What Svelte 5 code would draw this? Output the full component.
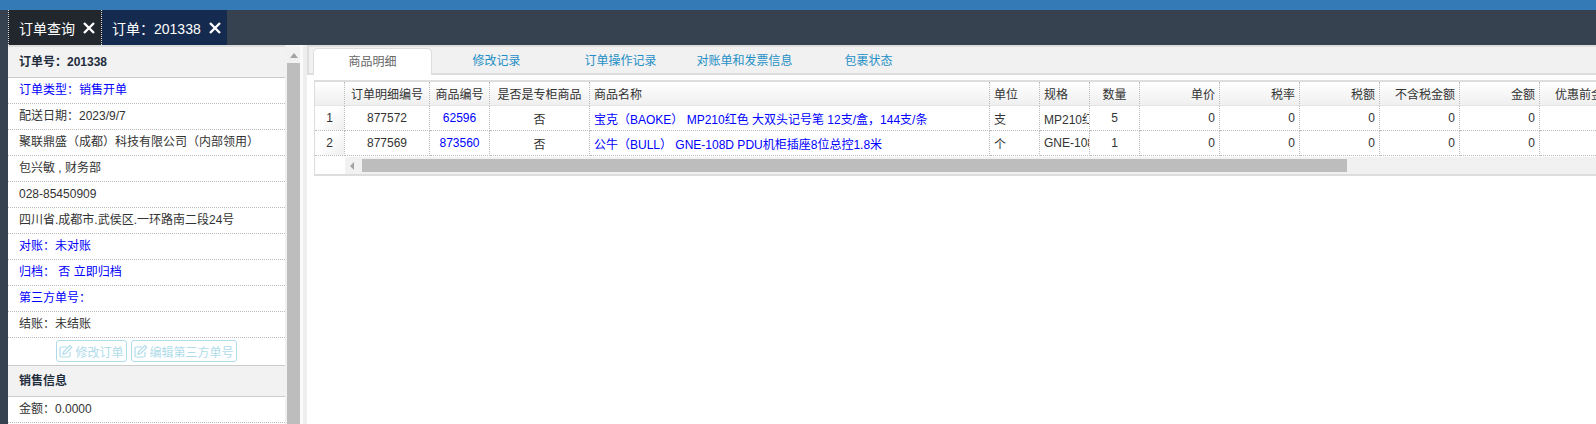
<script>
  const info = [
    { text: '订单类型：销售开单', link: true },
    { text: '配送日期：2023/9/7' },
    { text: '聚联鼎盛（成都）科技有限公司（内部领用）' },
    { text: '包兴敏 , 财务部' },
    { text: '028-85450909' },
    { text: '四川省.成都市.武侯区.一环路南二段24号' },
    { text: '对账：未对账', link: true },
    { text: '归档：  否 立即归档', link: true },
    { text: '第三方单号：', link: true },
    { text: '结账：未结账' }
  ];

  const tabs = ['商品明细', '修改记录', '订单操作记录', '对账单和发票信息', '包裹状态'];

  const columns = [
    { title: '', width: 30, align: 'center' },
    { title: '订单明细编号', width: 85, align: 'center' },
    { title: '商品编号', width: 60, align: 'center' },
    { title: '是否是专柜商品', width: 100, align: 'center' },
    { title: '商品名称', width: 400, align: 'left' },
    { title: '单位', width: 50, align: 'left' },
    { title: '规格', width: 50, align: 'left' },
    { title: '数量', width: 50, align: 'center' },
    { title: '单价', width: 80, align: 'right' },
    { title: '税率', width: 80, align: 'right' },
    { title: '税额', width: 80, align: 'right' },
    { title: '不含税金额', width: 80, align: 'right' },
    { title: '金额', width: 80, align: 'right' },
    { title: '优惠前金额', width: 80, align: 'right' }
  ];

  const rows = [
    ['877572', '62596', '否', '宝克（BAOKE） MP210红色 大双头记号笔 12支/盒，144支/条', '支', 'MP210红色', '5', '0', '0', '0', '0', '0', ''],
    ['877569', '873560', '否', '公牛（BULL） GNE-108D PDU机柜插座8位总控1.8米', '个', 'GNE-108D', '1', '0', '0', '0', '0', '0', '']
  ];

  const linkCols = [1, 3];
</script>

{#snippet pencil()}
  <svg class="pencil" viewBox="0 0 14 14" width="14" height="14" aria-hidden="true">
    <path d="M11 8v3.500a1.500 1.500 0 0 1-1.500 1.500H2.500A1.500 1.500 0 0 1 1 11.500V4.500A1.500 1.500 0 0 1 2.500 3H8" fill="none" stroke="currentColor" stroke-width="1.200" />
    <path d="M4.500 7.800 10.800 1.500l1.900 1.900-6.300 6.300-2.400.5z" fill="none" stroke="currentColor" stroke-width="1.200" />
  </svg>
{/snippet}

{#snippet closeIcon()}
  <svg class="close" viewBox="0 0 12 12" width="12" height="12" aria-hidden="true">
    <path d="M1 1 11 11M11 1 1 11" fill="none" stroke="currentColor" stroke-width="2.400" />
  </svg>
{/snippet}

<div class="page">
  <div class="topline"></div>
  <nav class="tabbar">
    <div class="maintab dark"><span>订单查询</span>{@render closeIcon()}</div>
    <div class="maintab navy"><span>订单：201338</span>{@render closeIcon()}</div>
  </nav>
  <div class="body">
    <aside class="side">
      <div class="side-scroll">
        <div class="side-head">订单号：201338</div>
        {#each info as row}
          <div class="side-row" class:link={row.link}>{row.text}</div>
        {/each}
        <div class="side-actions">
          <button type="button" class="ghost">{@render pencil()}修改订单</button>
          <button type="button" class="ghost">{@render pencil()}编辑第三方单号</button>
        </div>
        <div class="side-head second">销售信息</div>
        <div class="side-row">金额：0.0000</div>
      </div>
      <div class="vscroll">
        <div class="arrow-up"></div>
        <div class="vthumb"></div>
      </div>
    </aside>
    <div class="splitter"></div>
    <main class="content">
      <div class="subtabs">
        {#each tabs as tab, i}
          <div class="subtab" class:selected={i === 0}>{tab}</div>
        {/each}
      </div>
      <div class="grid-wrap">
        <table class="grid">
          <colgroup>
            {#each columns as col}
              <col style="width: {col.width}px" />
            {/each}
          </colgroup>
          <thead>
            <tr>
              {#each columns as col}
                <th class={col.align}>{col.title}</th>
              {/each}
            </tr>
          </thead>
          <tbody>
            {#each rows as row, r}
              <tr>
                <td class="rownum">{r + 1}</td>
                {#each row as cell, c}
                  <td class={columns[c + 1].align} class:blue={linkCols.includes(c)}><div class="clip">{cell}</div></td>
                {/each}
              </tr>
            {/each}
          </tbody>
        </table>
        <div class="hscroll">
          <div class="arrow-cell"></div>
          <div class="arrow-left"></div>
          <div class="hthumb"></div>
        </div>
      </div>
    </main>
  </div>
</div>

<style>
  :global(body) {
    margin: 0;
    background: #fff;
  }

  .page {
    width: 1596px;
    height: 424px;
    overflow: hidden;
    font-family: "Liberation Sans", "Noto Sans CJK SC", sans-serif;
    font-size: 12px;
    color: #333;
    background: #fff;
  }

  .topline {
    height: 10px;
    background: #337ab7;
  }

  .tabbar {
    display: flex;
    height: 35px;
    padding-left: 8px;
    background: #36424f;
  }

  .maintab {
    display: flex;
    align-items: center;
    gap: 8px;
    box-sizing: border-box;
    padding-left: 10px;
    color: #fff;
    font-size: 14px;
    white-space: nowrap;
  }

  .maintab.dark {
    width: 94px;
    background: #22272e;
    border-left: 1px dotted #ddd;
    border-right: 1px dotted #ddd;
  }

  .maintab.navy {
    width: 125px;
    background: #142a4e;
  }

  .close {
    flex: none;
  }

  .body {
    display: flex;
    height: 379px;
    border-left: 8px solid #36424f;
  }

  .side {
    display: flex;
    width: 292px;
    flex: none;
  }

  .side-scroll {
    width: 277px;
    flex: none;
    border-top: 2px solid #ddd;
  }

  .side-head {
    height: 30px;
    line-height: 30px;
    padding-left: 11px;
    font-weight: 700;
    color: #1f2d3d;
    background: #f2f2f2;
    border-bottom: 1px solid #ccc;
  }

  .side-head.second {
    border-top: 1px solid #ccc;
  }

  .side-row {
    height: 25px;
    line-height: 25px;
    padding-left: 11px;
    white-space: nowrap;
    border-bottom: 1px dotted #bbb;
  }

  .side-row.link {
    color: #00f;
  }

  .side-actions {
    display: flex;
    justify-content: center;
    gap: 4px;
    height: 27px;
    padding-top: 2px;
    box-sizing: border-box;
  }

  .ghost {
    display: flex;
    align-items: center;
    gap: 2px;
    height: 22px;
    padding: 0 2px;
    font: inherit;
    color: #b0dcea;
    background: #fff;
    border: 1px solid #b0dcea;
    border-radius: 3px;
    white-space: nowrap;
  }

  .pencil {
    flex: none;
  }

  .vscroll {
    width: 15px;
    flex: none;
    padding-top: 8px;
    background: #f1f1f1;
  }

  .arrow-up {
    width: 0;
    height: 0;
    margin: 0 auto 5px;
    border-left: 4px solid transparent;
    border-right: 4px solid transparent;
    border-bottom: 5px solid #a3a3a3;
    transform: translateX(1px);
  }

  .vthumb {
    height: 400px;
    margin-left: 2px;
    background: #bdbdbd;
  }

  .splitter {
    width: 7px;
    flex: none;
    box-sizing: border-box;
    border-left: 3px solid #fafafa;
    background: #eee;
  }

  .content {
    flex: 1;
    min-width: 0;
    overflow: hidden;
    border-top: 2px solid #ddd;
  }

  .subtabs {
    display: flex;
    gap: 5px;
    box-sizing: border-box;
    height: 28px;
    padding-left: 4px;
    background: #f1f1f1;
    border-left: 2px solid #ddd;
    border-bottom: 2px solid #ddd;
  }

  .subtab {
    width: 119px;
    flex: none;
    box-sizing: border-box;
    margin-top: 1px;
    line-height: 26px;
    text-align: center;
    color: #1e8fc6;
  }

  .subtab.selected {
    height: 27px;
    color: #666;
    background: #fff;
    border: 1px solid #ddd;
    border-bottom: none;
    border-radius: 5px 5px 0 0;
  }

  .grid-wrap {
    width: 1400px;
    margin: 5px 0 0 7px;
    border: 1px solid #ddd;
    border-width: 2px 0 2px 1px;
    overflow: hidden;
  }

  .grid {
    width: 1285px;
    table-layout: fixed;
    border-collapse: separate;
    border-spacing: 0;
  }

  .grid th,
  .grid td {
    box-sizing: border-box;
    padding: 0;
    white-space: nowrap;
    overflow: hidden;
    border-right: 1px dotted #bbb;
  }

  .grid th {
    height: 24px;
    font-weight: 400;
    background: linear-gradient(#fff, #efefef);
    border-bottom: 1px solid #e5e5e5;
  }

  .grid td {
    height: 25px;
    border-bottom: 1px dotted #bbb;
  }

  .grid .left {
    padding-left: 4px;
    text-align: left;
  }

  .grid .center {
    text-align: center;
  }

  .grid .right {
    padding-right: 4px;
    text-align: right;
  }

  .grid td.rownum {
    text-align: center;
    background: linear-gradient(135deg, #fff 40%, #eee);
  }

  .grid td.blue {
    color: #00f;
  }

  .clip {
    overflow: hidden;
  }

  .hscroll {
    display: flex;
    align-items: center;
    height: 18px;
    box-sizing: border-box;
    border-top: 1px solid #fff;
    background: #f1f1f1;
  }

  .arrow-cell {
    width: 30px;
    height: 100%;
    flex: none;
    background: #fff;
  }

  .arrow-left {
    width: 0;
    height: 0;
    flex: none;
    margin-left: 5px;
    border-top: 4px solid transparent;
    border-bottom: 4px solid transparent;
    border-right: 4px solid #a3a3a3;
  }

  .hthumb {
    width: 985px;
    height: 13px;
    flex: none;
    margin-left: 8px;
    background: #bdbdbd;
  }
</style>
